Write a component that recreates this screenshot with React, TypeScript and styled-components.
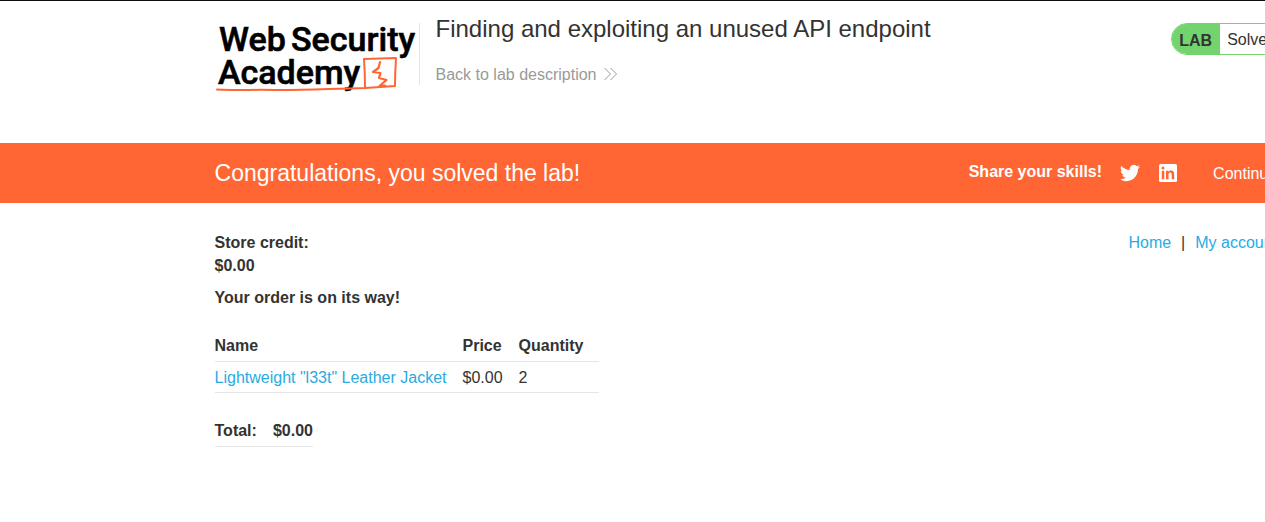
import React from "react";
import styled, { createGlobalStyle } from "styled-components";

const GlobalStyle = createGlobalStyle`
  * { box-sizing: border-box; }
  html { overflow-x: hidden; }
  body {
    margin: 0;
    overflow-x: hidden;
    background: #fff;
    color: #333332;
    font-family: "Liberation Sans", Arial, sans-serif;
    font-size: 16px;
    line-height: 23px;
  }
`;

const Page = styled.div`
  overflow: hidden;
  border-top: 1px solid #0b0b12;
`;

const Container = styled.div`
  width: 87%;
  margin-left: 16.96%;
`;

const HeaderRow = styled(Container)`
  display: flex;
  align-items: flex-start;
  padding: 22px 0 50px;
`;

const LogoLink = styled.a`
  display: block;
  flex: none;
  height: 70px;
`;

const TitleBlock = styled.div`
  flex: 1;
  height: 62px;
  padding-left: 16px;
  border-left: 1px solid #e5e5e5;
`;

const Title = styled.h1`
  margin: -8px 0 20px;
  font-size: 24px;
  line-height: 28px;
  font-weight: 400;
`;

const BackLink = styled.a`
  display: inline-flex;
  align-items: center;
  gap: 7px;
  color: #999;
  text-decoration: none;
`;

const Status = styled.div`
  display: flex;
  flex: none;
  height: 32px;
  line-height: 30px;
  border: 1px solid #72d36f;
  border-radius: 16px;
  overflow: hidden;
`;

const StatusTag = styled.strong`
  padding: 2px 8px 0 7px;
  background: #72d36f;
`;

const StatusText = styled.span`
  padding: 1px 38px 0 7px;
`;

const Banner = styled.section`
  background: #ff6633;
  color: #fff;
`;

const BannerRow = styled(Container)`
  display: flex;
  align-items: center;
  height: 60px;
  white-space: nowrap;
`;

const BannerTitle = styled.h2`
  flex: 1;
  margin: 0;
  font-size: 23px;
  font-weight: 400;
`;

const Share = styled.div`
  display: flex;
  align-items: center;
  gap: 18px;
`;

const ShareLabel = styled.strong`
  padding-bottom: 3px;
`;

const IconLink = styled.a`
  display: block;
  height: 20px;
  color: #fff;
`;

const ContinueLink = styled.a`
  width: 102px;
  margin-left: 35px;
  color: #fff;
  text-decoration: none;
`;

const MainRow = styled(Container)`
  display: flex;
  justify-content: space-between;
  align-items: flex-start;
  padding-top: 28px;
`;

const StoreCredit = styled.p`
  margin: 0 0 9px;
  font-weight: 700;
`;

const Message = styled.h3`
  margin: 0 0 21px;
  font-size: 16px;
`;

const Nav = styled.nav`
  display: flex;
  gap: 10px;
  padding-right: 38px;
`;

const Link = styled.a`
  color: #29abe2;
  text-decoration: none;
`;

const Table = styled.table`
  border-collapse: collapse;
  text-align: left;
`;

const OrderTable = styled(Table)`
  margin-bottom: 22px;
  th, td {
    padding: 4px 16px 3px 0;
    border-bottom: 1px solid #e5e5e5;
  }
  th { padding-bottom: 4px; }
`;

const TotalTable = styled(Table)`
  margin-bottom: 40px;
  th { padding: 4px 0; border-bottom: 1px solid #e5e5e5; }
  th + th { padding-left: 16px; }
`;

const Logo = () => (
  <svg width="204" height="70" viewBox="0 0 204 70" role="img" aria-label="Web Security Academy">
    <g fontFamily="Roboto, sans-serif" fontWeight="500" fontSize="34" fill="#000" stroke="#000" strokeWidth="0.6">
      <text x="4" y="28">Web</text>
      <text x="76" y="28">Security</text>
      <text x="3" y="61">Academy</text>
    </g>
    <g fill="none" stroke="#ff6633" strokeLinejoin="round" strokeLinecap="round">
      <path strokeWidth="2" d="M2 66.5C20 67.5 40 66.5 60 67S110 66 150 65Q150 50 149 36L181 35Q180 50 180 63L150 65" />
      <path strokeWidth="2.2" d="M165 39L163.500 45L158 49L165.500 50L164 55L171.500 57L164.500 63L170 62.500" />
    </g>
  </svg>
);

const DoubleChevron = () => (
  <svg width="13" height="14" viewBox="0 0 13 14" fill="none" stroke="#999" aria-hidden="true">
    <path d="M.5 0L6.500 6L.5 12M6.500 0L12.500 6L6.500 12" />
  </svg>
);

const TwitterIcon = () => (
  <svg width="20" height="20" viewBox="0 0 24 24" fill="currentColor" aria-hidden="true">
    <path d="M23.95 4.57a10 10 0 0 1-2.82.77 4.96 4.96 0 0 0 2.16-2.72c-.95.55-2 .95-3.13 1.19a4.92 4.92 0 0 0-8.38 4.48C7.69 8.1 4.07 6.13 1.64 3.16a4.92 4.92 0 0 0 1.52 6.57 4.9 4.9 0 0 1-2.23-.61v.06c0 2.38 1.7 4.37 3.95 4.83a5 5 0 0 1-2.21.08 4.94 4.94 0 0 0 4.6 3.42A9.87 9.87 0 0 1 0 19.54a14 14 0 0 0 7.55 2.21c9.05 0 14-7.5 14-13.98 0-.21 0-.42-.02-.63a9.94 9.94 0 0 0 2.46-2.55z" />
  </svg>
);

const LinkedInIcon = () => (
  <svg width="20" height="20" viewBox="0 0 20 20" aria-hidden="true">
    <rect x="1" y="1" width="18" height="18" rx="1.5" fill="#fff" />
    <g fill="#ff6633">
      <circle cx="5" cy="5" r="1.5" />
      <path d="M3.8 7.7h2.5v8.5H3.8zM8 7.7h2.4v1.2c.5-.9 1.4-1.4 2.6-1.4 2.5 0 3.2 1.6 3.2 4v4.7h-2.5V12c0-1.4-.2-2.4-1.5-2.4s-1.7 1-1.7 2.3v4.3H8z" />
    </g>
  </svg>
);

export default function App() {
  return (
    <>
      <GlobalStyle />
      <Page>
        <HeaderRow as="header">
          <LogoLink href="#"><Logo /></LogoLink>
          <TitleBlock>
            <Title>Finding and exploiting an unused API endpoint</Title>
            <BackLink href="#">Back to lab description <DoubleChevron /></BackLink>
          </TitleBlock>
          <Status>
            <StatusTag>LAB</StatusTag>
            <StatusText>Solved</StatusText>
          </Status>
        </HeaderRow>
        <Banner>
          <BannerRow>
            <BannerTitle>Congratulations, you solved the lab!</BannerTitle>
            <Share>
              <ShareLabel>Share your skills!</ShareLabel>
              <IconLink href="#" aria-label="Share on Twitter"><TwitterIcon /></IconLink>
              <IconLink href="#" aria-label="Share on LinkedIn"><LinkedInIcon /></IconLink>
            </Share>
            <ContinueLink href="#">Continue learning</ContinueLink>
          </BannerRow>
        </Banner>
        <MainRow as="main">
          <div>
            <StoreCredit>Store credit:<br />$0.00</StoreCredit>
            <Message>Your order is on its way!</Message>
            <OrderTable>
              <thead>
                <tr><th>Name</th><th>Price</th><th>Quantity</th></tr>
              </thead>
              <tbody>
                <tr>
                  <td><Link href="#">Lightweight "l33t" Leather Jacket</Link></td>
                  <td>$0.00</td>
                  <td>2</td>
                </tr>
              </tbody>
            </OrderTable>
            <TotalTable>
              <tbody>
                <tr><th scope="row">Total:</th><th>$0.00</th></tr>
              </tbody>
            </TotalTable>
          </div>
          <Nav>
            <Link href="#">Home</Link>
            <span>|</span>
            <Link href="#">My account</Link>
          </Nav>
        </MainRow>
      </Page>
    </>
  );
}
